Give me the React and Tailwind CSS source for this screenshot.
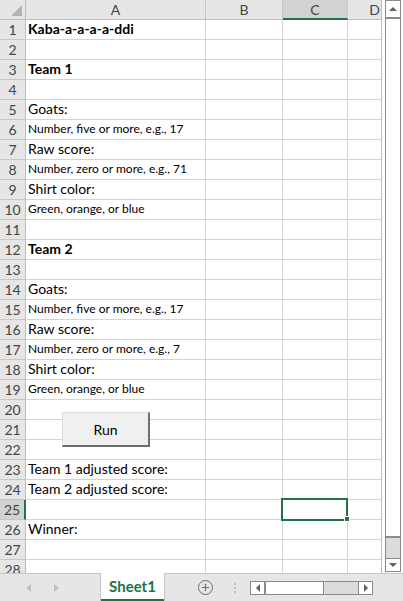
import { Plus } from 'lucide-react'

const rows = [
  { a: 'Kaba-a-a-a-a-ddi', bold: true },
  {},
  { a: 'Team 1', bold: true },
  {},
  { a: 'Goats:' },
  { a: 'Number, five or more, e.g., 17', small: true },
  { a: 'Raw score:' },
  { a: 'Number, zero or more, e.g., 71', small: true },
  { a: 'Shirt color:' },
  { a: 'Green, orange, or blue', small: true },
  {},
  { a: 'Team 2', bold: true },
  {},
  { a: 'Goats:' },
  { a: 'Number, five or more, e.g., 17', small: true },
  { a: 'Raw score:' },
  { a: 'Number, zero or more, e.g., 7', small: true },
  { a: 'Shirt color:' },
  { a: 'Green, orange, or blue', small: true },
  {},
  {},
  {},
  { a: 'Team 1 adjusted score:' },
  { a: 'Team 2 adjusted score:' },
  {},
  { a: 'Winner:' },
  {},
  {},
]

const font = { fontFamily: 'Lato, "Noto Sans", sans-serif' }

function ColHeader({ label, width, selected }) {
  return (
    <div
      className={`${width} h-[20px] shrink-0 flex items-center justify-center text-[14px] text-[#444] border-r border-[#c6c6c6] ${
        selected ? 'bg-[#d2d2d2] border-b-2 border-b-[#217346]' : 'border-b border-b-[#bdbdbd]'
      }`}
    >
      {label}
    </div>
  )
}

export default function App() {
  return (
    <div className="w-[403px] h-[601px] bg-white overflow-hidden flex flex-col" style={font}>
      <div className="flex h-[573px]">
        {/* Grid pane */}
        <div className="relative w-[382px] h-full overflow-hidden border-r border-[#bdbdbd]">
          <div className="flex bg-[#e6e6e6]">
            <div className="w-[26px] h-[20px] shrink-0 relative border-r border-b border-[#bdbdbd]">
              <div className="absolute right-[3px] bottom-[3px] w-0 h-0 border-l-[11px] border-l-transparent border-b-[11px] border-b-[#b4b4b4]" />
            </div>
            <ColHeader label="A" width="w-[180px]" />
            <ColHeader label="B" width="w-[77px]" />
            <ColHeader label="C" width="w-[65px]" selected />
            <ColHeader label="D" width="w-[54px]" />
          </div>

          {rows.map((r, i) => {
            const n = i + 1
            const sel = n === 25
            return (
              <div key={n} className="flex h-[20px]">
                <div
                  className={`w-[26px] shrink-0 flex items-center justify-center text-[14px] text-[#444] border-b border-[#c6c6c6] ${
                    sel ? 'bg-[#d2d2d2] border-r-2 border-r-[#217346]' : 'bg-[#e6e6e6] border-r border-r-[#bdbdbd]'
                  }`}
                >
                  {n}
                </div>
                <div
                  className={`w-[180px] shrink-0 border-r border-b border-[#d4d4d4] flex items-end pl-[2px] whitespace-nowrap text-black ${
                    r.small ? 'text-[12px] pb-[1px]' : 'text-[14px]'
                  } ${r.bold ? 'font-bold' : ''}`}
                >
                  {r.a}
                </div>
                <div className="w-[77px] shrink-0 border-r border-b border-[#d4d4d4]" />
                <div className="w-[65px] shrink-0 border-r border-b border-[#d4d4d4]" />
                <div className="w-[54px] shrink-0 border-r border-b border-[#d4d4d4]" />
              </div>
            )
          })}

          {/* Run button */}
          <div className="absolute left-[62px] top-[412px] w-[88px] h-[35px] bg-[#f0f0f0] border border-[#dcdcdc] border-r-2 border-b-2 border-r-[#6e6e6e] border-b-[#6e6e6e] flex items-center justify-center text-[14px] text-black">
            Run
          </div>

          {/* Selected cell C25 */}
          <div className="absolute left-[281px] top-[498px] w-[67px] h-[23px] border-2 border-[#217346]" />
          <div className="absolute left-[344px] top-[516px] w-[6px] h-[6px] bg-[#217346] border border-white" />
        </div>

        {/* Vertical scrollbar */}
        <div className="w-[21px] h-full flex flex-col pl-[3px] pr-[2px] bg-white">
          <div className="h-[17px] shrink-0 border border-[#8a8a8a] border-b-0 flex items-center justify-center">
            <div className="w-0 h-0 border-l-[4px] border-r-[4px] border-b-[4px] border-l-transparent border-r-transparent border-b-[#606060]" />
          </div>
          <div className="flex-1 flex flex-col border-x border-[#8a8a8a] bg-[#dcdcdc]">
            <div className="h-[521px] bg-white border-y-2 border-[#8a8a8a]" />
          </div>
          <div className="h-[14px] shrink-0 border border-[#8a8a8a] bg-white flex items-center justify-center mb-[1px]">
            <div className="w-0 h-0 border-l-[4px] border-r-[4px] border-t-[4px] border-l-transparent border-r-transparent border-t-[#606060]" />
          </div>
        </div>
      </div>

      {/* Sheet tab bar */}
      <div className="h-[28px] flex items-stretch bg-[#e6e6e6] border-t border-[#c6c6c6] relative">
        <div className="w-[100px] flex items-center">
          <div className="ml-[26px] w-0 h-0 border-t-[4px] border-b-[4px] border-r-[5px] border-t-transparent border-b-transparent border-r-[#c0c0c0]" />
          <div className="ml-[23px] w-0 h-0 border-t-[4px] border-b-[4px] border-l-[5px] border-t-transparent border-b-transparent border-l-[#c0c0c0]" />
        </div>
        <div className="w-[65px] -mt-px bg-white border-x border-[#c6c6c6] flex flex-col">
          <div className="flex-1 flex items-center justify-center text-[15px] font-bold text-[#217346]">Sheet1</div>
          <div className="h-[2px] bg-[#217346]" />
        </div>
        <div className="flex items-center">
          <Plus className="ml-[33px] w-[15px] h-[15px] text-[#6e6e6e] border-[1.5px] border-[#6e6e6e] rounded-full p-[1px]" strokeWidth={2.5} />
          <div className="ml-[21px] flex flex-col gap-[2px]">
            <div className="w-[2px] h-[2px] bg-[#c0c0c0]" />
            <div className="w-[2px] h-[2px] bg-[#c0c0c0]" />
            <div className="w-[2px] h-[2px] bg-[#c0c0c0]" />
          </div>
          {/* Horizontal scrollbar */}
          <div className="ml-[14px] w-[123px] h-[14px] flex border border-[#8a8a8a] bg-[#dcdcdc]">
            <div className="w-[14px] h-full bg-white flex items-center justify-center border-r border-[#8a8a8a]">
              <div className="w-0 h-0 border-t-[4px] border-b-[4px] border-r-[4px] border-t-transparent border-b-transparent border-r-[#606060]" />
            </div>
            <div className="w-[58px] h-full bg-white border-l border-[#8a8a8a]" />
            <div className="flex-1 border-l border-[#8a8a8a]" />
            <div className="w-[14px] h-full bg-white flex items-center justify-center border-l border-[#8a8a8a]">
              <div className="w-0 h-0 border-t-[4px] border-b-[4px] border-l-[4px] border-t-transparent border-b-transparent border-l-[#606060]" />
            </div>
          </div>
        </div>
      </div>
    </div>
  )
}
